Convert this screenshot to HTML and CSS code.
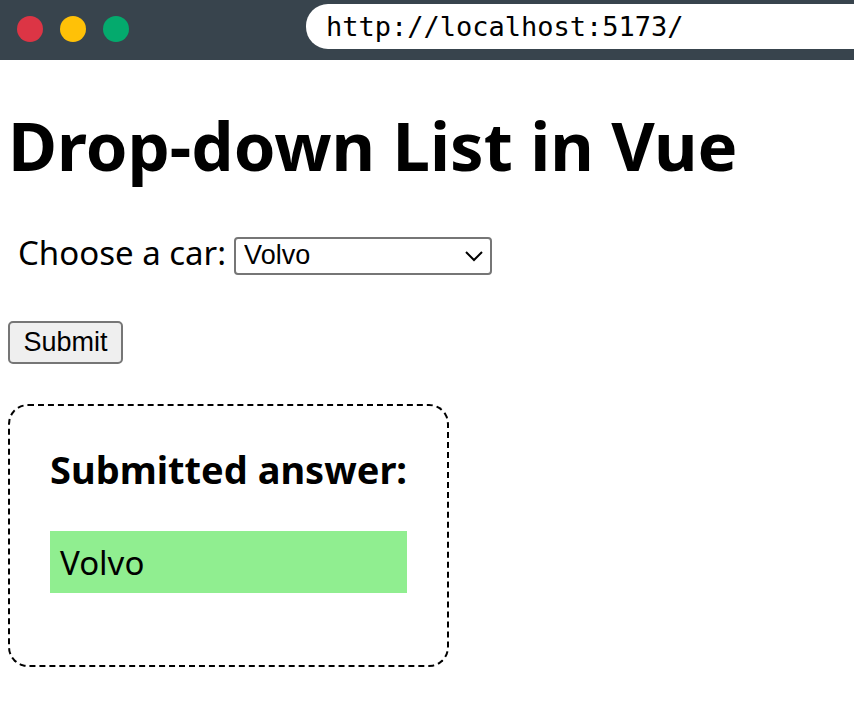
FILE: index.html
```html
<!DOCTYPE html>
<html lang="en">
<head>
<meta charset="utf-8">
<title>Drop-down List in Vue</title>
<link rel="stylesheet" href="styles.css">
</head>
<body>
<header class="browser-bar">
  <div class="dots">
    <span class="dot red"></span>
    <span class="dot yellow"></span>
    <span class="dot green"></span>
  </div>
  <div class="address">http://localhost:5173/</div>
</header>
<main class="page">
  <h1>Drop-down List in Vue</h1>
  <form>
    <div class="field">
      <label for="car">Choose a car:</label>
      <span class="select-wrap">
        <select id="car">
          <option selected>Volvo</option>
          <option>Saab</option>
          <option>Opel</option>
          <option>Audi</option>
        </select>
        <svg class="chevron" viewBox="0 0 18 12" aria-hidden="true"><path d="M1 2 L9 10 L17 2"/></svg>
      </span>
    </div>
    <button type="button">Submit</button>
  </form>
  <section class="answer">
    <h3>Submitted answer:</h3>
    <p>Volvo</p>
  </section>
</main>
</body>
</html>
```
FILE: styles.css
```css
* {
  box-sizing: border-box;
}

body {
  margin: 0;
  background: #fff;
  color: #000;
  font-family: "Segoe UI", "Noto Sans", sans-serif;
  font-size: 33px;
}

.browser-bar {
  display: flex;
  align-items: flex-start;
  height: 60px;
  padding: 4px 0 0 17px;
  background: #38444d;
}

.dots {
  display: flex;
  flex: none;
  gap: 17px;
  width: 289px;
  padding-top: 12px;
}

.dot {
  width: 26px;
  height: 26px;
  border-radius: 50%;
}

.red { background: #dc3545; }
.yellow { background: #ffc107; }
.green { background: #04aa6d; }

.address {
  flex: 1;
  height: 45px;
  padding-left: 20px;
  border-radius: 22px 0 0 22px;
  background: #fff;
  font-family: Consolas, "DejaVu Sans Mono", monospace;
  font-size: 27px;
  line-height: 45px;
}

.page {
  padding: 40px 8px 0;
}

h1 {
  margin: 0;
  font-size: 67px;
  line-height: 90px;
}

.field {
  display: flex;
  align-items: flex-end;
  gap: 8px;
  margin-top: 41px;
  padding-left: 10px;
  line-height: 44px;
}

.select-wrap {
  position: relative;
}

select {
  display: block;
  width: 258px;
  height: 38px;
  padding: 0 8px 2px;
  appearance: none;
  border: 2px solid #767676;
  border-radius: 4px;
  background: #fff;
  color: #000;
  font: 27px/30px "Liberation Sans", sans-serif;
}

.chevron {
  position: absolute;
  top: 13px;
  right: 9px;
  width: 18px;
  height: 12px;
  fill: none;
  stroke: #000;
  stroke-width: 2;
  pointer-events: none;
}

button {
  display: block;
  width: 115px;
  height: 43px;
  margin-top: 46px;
  padding: 0 0 2px;
  border: 2px solid #767676;
  border-radius: 5px;
  background: #efefef;
  color: #000;
  font: 27px/30px "Liberation Sans", sans-serif;
}

.answer {
  width: fit-content;
  margin-top: 40px;
  padding: 37px 40px 72px;
  border: 2px dashed #000;
  border-radius: 20px;
}

h3 {
  margin: 0;
  font-size: 38px;
  line-height: 52px;
}

.answer p {
  margin: 36px 0 0;
  padding: 10px 10px 8px;
  background: #90ee90;
  line-height: 44px;
}
```
